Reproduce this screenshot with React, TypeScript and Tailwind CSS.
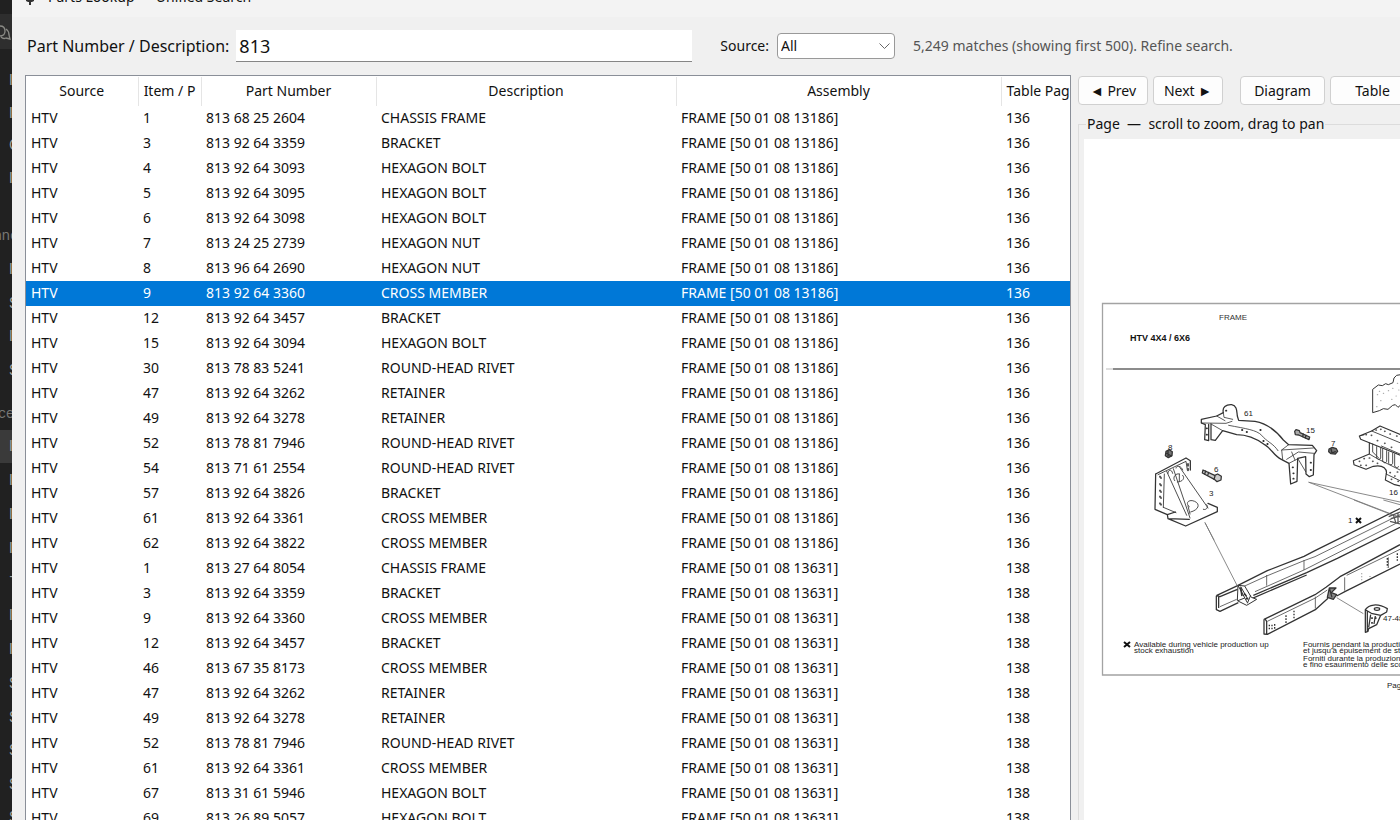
import { useState } from 'react';

type Part = {
  source: string;
  item: string;
  number: string;
  desc: string;
  assembly: string;
  page: string;
};

const FRAME_A = 'FRAME [50 01 08 13186]';
const FRAME_B = 'FRAME [50 01 08 13631]';

const part = (item: string, number: string, desc: string, assembly: string, page: string): Part => ({
  source: 'HTV', item, number, desc, assembly, page,
});

const PARTS: Part[] = [
  part('1', '813 68 25 2604', 'CHASSIS FRAME', FRAME_A, '136'),
  part('3', '813 92 64 3359', 'BRACKET', FRAME_A, '136'),
  part('4', '813 92 64 3093', 'HEXAGON BOLT', FRAME_A, '136'),
  part('5', '813 92 64 3095', 'HEXAGON BOLT', FRAME_A, '136'),
  part('6', '813 92 64 3098', 'HEXAGON BOLT', FRAME_A, '136'),
  part('7', '813 24 25 2739', 'HEXAGON NUT', FRAME_A, '136'),
  part('8', '813 96 64 2690', 'HEXAGON NUT', FRAME_A, '136'),
  part('9', '813 92 64 3360', 'CROSS MEMBER', FRAME_A, '136'),
  part('12', '813 92 64 3457', 'BRACKET', FRAME_A, '136'),
  part('15', '813 92 64 3094', 'HEXAGON BOLT', FRAME_A, '136'),
  part('30', '813 78 83 5241', 'ROUND-HEAD RIVET', FRAME_A, '136'),
  part('47', '813 92 64 3262', 'RETAINER', FRAME_A, '136'),
  part('49', '813 92 64 3278', 'RETAINER', FRAME_A, '136'),
  part('52', '813 78 81 7946', 'ROUND-HEAD RIVET', FRAME_A, '136'),
  part('54', '813 71 61 2554', 'ROUND-HEAD RIVET', FRAME_A, '136'),
  part('57', '813 92 64 3826', 'BRACKET', FRAME_A, '136'),
  part('61', '813 92 64 3361', 'CROSS MEMBER', FRAME_A, '136'),
  part('62', '813 92 64 3822', 'CROSS MEMBER', FRAME_A, '136'),
  part('1', '813 27 64 8054', 'CHASSIS FRAME', FRAME_B, '138'),
  part('3', '813 92 64 3359', 'BRACKET', FRAME_B, '138'),
  part('9', '813 92 64 3360', 'CROSS MEMBER', FRAME_B, '138'),
  part('12', '813 92 64 3457', 'BRACKET', FRAME_B, '138'),
  part('46', '813 67 35 8173', 'CROSS MEMBER', FRAME_B, '138'),
  part('47', '813 92 64 3262', 'RETAINER', FRAME_B, '138'),
  part('49', '813 92 64 3278', 'RETAINER', FRAME_B, '138'),
  part('52', '813 78 81 7946', 'ROUND-HEAD RIVET', FRAME_B, '138'),
  part('61', '813 92 64 3361', 'CROSS MEMBER', FRAME_B, '138'),
  part('67', '813 31 61 5946', 'HEXAGON BOLT', FRAME_B, '138'),
  part('69', '813 26 89 5057', 'HEXAGON BOLT', FRAME_B, '138'),
];

const HEADERS = ['Source', 'Item / P', 'Part Number', 'Description', 'Assembly', 'Table Pag'];

// Letters of the window behind that stick out on the left
const BEHIND = [
  { y: 80, t: 'I' }, { y: 113, t: 'I' }, { y: 145, t: 'C' }, { y: 178, t: 'I' }, { y: 269, t: 'I' },
  { y: 303, t: 'S' }, { y: 336, t: 'I' }, { y: 370, t: 'S' }, { y: 446, t: 'I' }, { y: 480, t: 'I' },
  { y: 514, t: 'I' }, { y: 548, t: 'I' }, { y: 576, t: '-' }, { y: 615, t: 'I' }, { y: 649, t: 'I' },
  { y: 683, t: 'S' }, { y: 717, t: 'S' }, { y: 750, t: 'S' }, { y: 784, t: 'S' }, { y: 817, t: 'S' },
];

function BackgroundWindow() {
  return (
    <div className="w-3 shrink-0 overflow-hidden bg-[#212121]">
      <svg width="12" height="820" fill="#a5a5a2" fontFamily="Inter, sans-serif" fontSize="14" aria-hidden="true">
        <rect y="14" width="12" height="35" fill="#2e2e2e" />
        <rect y="430" width="12" height="33" fill="#3a3a3a" />
        <g fill="none" stroke="#8b8b86" strokeWidth="1.3">
          <path d="M0 26c3 0 5 2 5 5s-2 5-5 5M6 29c3 2 3 4 3 6l1 4-4-1c-2 1-4 0-5-1" />
        </g>
        <text x="-6" y="240" fill="#777774">and</text>
        <text x="-2" y="418" fill="#777774">ces</text>
        {BEHIND.map((l) => (
          <text key={l.y} x="9" y={l.y + 5}>{l.t}</text>
        ))}
      </svg>
    </div>
  );
}

function Diagram() {
  return (
    <svg width="316" height="681" viewBox="1084 139 316 681" fontFamily="'Liberation Sans', Arial, sans-serif" role="img" aria-label="Frame diagram">
      <path d="M1400 303.5H1102.5V675H1400" fill="none" stroke="#a3a3a3" strokeWidth="1.3" />
      <path d="M1106 369H1113" stroke="#bbb" />
      <path d="M1113 369H1400" stroke="#666" strokeWidth="1.4" />
      <text x="1219" y="320" fontSize="8" fill="#333">FRAME</text>
      <text x="1130" y="341" fontSize="9" fontWeight="700" fill="#111">HTV 4X4 / 6X6</text>

      {/* cross member, bracket, bolts */}
      <g transform="translate(1140 390) scale(.33333)" fill="none" stroke="#333" strokeWidth="3.8" strokeLinejoin="round" strokeLinecap="round">
        <path d="M184 88L230 78 250 68C246 52 258 43 275 44 292 47 290 64 292 78L296 91 345 94C380 100 408 122 430 150L446 164 517 166 530 182 522 194 520 255 508 260 498 252 497 200 473 205 471 274 452 282 447 220 424 208C400 196 395 176 374 164 348 145 325 134 290 134L248 122 226 151 213 149 213 102 M184 88L184 99 196 104 194 149 206 152 206 103" />
        <path d="M250 68L252 82 278 88M184 99L258 100 276 94M213 102L248 122M266 106C318 116 350 120 365 136 380 155 400 160 414 182M446 164L425 180 428 208M425 180L520 174M440 208L475 186 522 190M447 220L470 208M455 186L465 210M473 205L497 245M230 78L255 92" strokeWidth="2.4" />
        <path d="M258 62h1M306 120h1M320 126h1M361 120h1M370 153h1M382 162h1M200 115h1M200 134h1M458 232h1M460 250h1M460 266h1M512 218h1M512 240h1" strokeWidth="5.5" />

        <path d="M47 252L138 204 151 212 151 240M47 252L45 358 82 374 84 386 137 408 232 365 232 352 204 340M82 374L106 366M84 386L148 388" />
        <path d="M54 254L138 214 142 240M73 252L70 352M80 244L140 376M100 236L150 384M118 230L204 354M84 250C84 238 95 236 98 250M108 234C108 226 124 226 128 240M104 272C96 262 108 248 118 252M118 252v22M128 256C136 264 128 276 112 276M148 350C134 340 146 326 164 334 182 342 176 360 152 366M144 348L150 372M190 358C200 362 206 350 200 344M70 352L108 368" strokeWidth="2.6" />
        <path d="M60 260l3 4M60 282l3 4M60 302l3 4M60 320l3 4M60 340l3 4M144 222v5M144 236v5" strokeWidth="6" stroke="#555" />

        <path d="M78 184l10-5 9 6-1 12-11 6-9-6z" fill="#777" />
        <path d="M80 190l14 8M84 184v14" strokeWidth="4" />
        <path d="M189 240l-2 9 36 19 8 7 12-5 1-11-11-7-9 4z" fill="#ccc" />
        <path d="M225 258l-3 10M197 243l-3 9M206 247l-3 9" />
        <path d="M464 124l4-5 10 3 2 6 29 13-2 8-31-14-10-1z" fill="#aaa" />
        <path d="M490 132l-2 8M498 136l-2 8" />
        <path d="M567 177l10-5 12 4 4 8-7 8-13-1-7-6z" fill="#777" />
        <path d="M573 177l3 12 10-4" strokeWidth="4" />

        <path d="M507 277L780 336M507 277L780 382M195 398L222 450" stroke="#777" strokeWidth="2.6" />
      </g>

      {/* torn plate and support, cut by the window edge */}
      <g transform="translate(1340 370) scale(.33333)" fill="none" stroke="#333" strokeWidth="3.4" strokeLinejoin="round" strokeLinecap="round">
        <path d="M182 14l-12 2-8 8-3 14-14 6-8-3-10 6-12-2-17 13v70l20-6 12-6 14 2 14-12 8-2 8 8 8-7" strokeWidth="3" />
        <path d="M112 74h1M122 92h1M110 110h1M130 70h1M145 62h1M118 64h1M158 55h1M168 78h1M155 88h1M172 40h1M176 60h1" stroke="#aaa" />
        <path d="M58 198l37-15 25-15 62 26M58 198l4 10 26 10 94 38M58 198l14-4M88 218v34l-48 20 2 12 36 14 22-9c30-6 44 8 38 27l-2 14 28 14 18 4" />
        <path d="M95 183l87 36M98 222v24l18 18M110 230v34c4 6 10 6 12 0v-30M128 236v38c4 6 10 6 12 0v-32M146 246v34c4 6 10 6 12 0v-30M164 252v36c4 6 8 6 12 2M88 252l24 14 68 34M138 312l42 20M124 228l56 24" strokeWidth="2.6" />
        <path d="M78 194h1M94 196h1M108 180h1M122 178h1M134 184h1M150 192h1M170 198h1M112 212h1M134 220h1M154 232h1M58 274h1M72 266h1M88 264h1M62 286h1M78 286h1M98 274h1M112 280h1M150 308h1M164 318h1M172 306h1M154 328h1M174 334h1" stroke="#555" strokeWidth="5" />
      </g>

      {/* chassis rails */}
      <g transform="translate(1200 500) scale(.33333)" fill="none" stroke="#333" strokeWidth="3.8" strokeLinejoin="round">
        <path d="M49 287L108 259 202 212 312 169 345 152 600 26M49 287v42l11 5 55-26M56 290l0 34M49 287l11 3 52-22M160 286L320 218 412 175 600 82M150 298L320 225" />
        <path d="M108 270L200 228 312 182 345 170 600 44M165 275L312 210 600 64M200 225v32M312 180v30M60 320l50-22" stroke="#555" strokeWidth="2.6" />
        <path d="M114 256l-2 46 28 14 30-18-16-6-20-34zM114 256l28 52M122 260l22 38M114 302l20-8M152 286l-10 24" fill="#fff" strokeWidth="3" />
        <path d="M122 262l4 26M138 296h7M132 280l7 8" strokeWidth="5" />
        <path d="M192 358L345 284 378 262 420 230 450 214 600 134M192 358v44l10 1 144-74 38-34M196 358l4 6v38M410 288L436 274 600 192" />
        <path d="M202 364l144-70 36-24M346 290v36M434 232v40M565 172v32M440 226L600 148" stroke="#555" strokeWidth="2.6" />
        <path d="M388 264l-6 28 18 6 10-14-16-6 14-14zM388 264l8 28" fill="#888" />
        <path d="M208 374v18M216 374v14M224 372v14M258 346v24M282 332v24M562 174v28M592 160v22" strokeDasharray="5 4" strokeWidth="4" />
        <path d="M485 220v24M510 228v8" strokeDasharray="3 6" stroke="#999" />
        <path d="M496 329C506 314 532 308 562 326L560 336 542 346 530 374 506 386 504 394 496 397zM496 329L514 340 542 346M502 334v60M512 344l-6 38M526 348l-4 24" />
        <ellipse cx="531" cy="327" rx="8" ry="4" />
        <path d="M516 352v5M516 366v5M527 352v5" strokeWidth="5" />
        <path d="M15 68L112 258M410 293L490 341M462 0L575 44M550 0L600 14" stroke="#777" strokeWidth="2.6" />
        <path d="M566 50l34-14M572 56l28-8M570 64l30 8M580 44l8 26M594 40v30" stroke="#555" />
      </g>

      <g fontSize="8" fill="#222">
        <text x="1244" y="416">61</text>
        <text x="1306" y="433">15</text>
        <text x="1331" y="446">7</text>
        <text x="1168" y="450">8</text>
        <text x="1214" y="472">6</text>
        <text x="1209" y="496">3</text>
        <text x="1389" y="495">16</text>
        <text x="1348" y="523">1</text>
        <text x="1383" y="621">47-48</text>
      </g>
      <path d="M1356 518l5 5m0-5l-5 5M1124 642l6 5m0-5l-6 5" stroke="#111" strokeWidth="2" />

      <g fontSize="8" fill="#222">
        <text x="1134" y="647">Available during vehicle production up</text>
        <text x="1134" y="653">stock exhaustion</text>
        <text x="1303" y="647">Fournis pendant la production</text>
        <text x="1303" y="653">et jusqu'à épuisement de stock</text>
        <text x="1303" y="661">Forniti durante la produzione</text>
        <text x="1303" y="667">e fino esaurimento delle scorte</text>
        <text x="1387" y="688">Page</text>
      </g>
    </svg>
  );
}

const toolButton = 'h-[29px] shrink-0 rounded border border-[#d0d0d0] bg-[#fdfdfd] text-center';

export default function App() {
  const [query, setQuery] = useState('813');
  const [source, setSource] = useState('All');
  const [selected, setSelected] = useState(7);

  return (
    <div className="flex h-screen overflow-hidden bg-[#f0f0f0] font-['Noto_Sans',sans-serif] text-sm text-[#111]">
      <BackgroundWindow />

      <div className="flex min-w-0 flex-1 flex-col">
        {/* title bar */}
        <header className="flex h-[17px] shrink-0 items-end overflow-hidden bg-[#f3f3f3] pb-3 pl-3">
          <svg width="12" height="16" viewBox="0 0 12 16" className="shrink-0" aria-hidden="true">
            <path d="M2 8h8v4l-2 1H7v3H5v-3H4l-2-1z" fill="#333" />
          </svg>
          <h1 className="ml-3 leading-4">Parts Lookup — Unified Search</h1>
        </header>

        {/* search row */}
        <div className="flex h-[58px] shrink-0 items-center whitespace-nowrap pl-[15px]">
          <label htmlFor="query" className="text-base">Part Number / Description:</label>
          <input
            id="query"
            value={query}
            onChange={(e) => setQuery(e.target.value)}
            className="ml-[7px] h-8 w-[456px] rounded-none border-b border-[#868686] bg-white px-[3px] text-lg outline-none"
          />
          <label htmlFor="source" className="ml-7">Source:</label>
          <div className="relative ml-2">
            <select
              id="source"
              value={source}
              onChange={(e) => setSource(e.target.value)}
              className="h-[26px] w-[118px] appearance-none rounded-sm border border-[#999] bg-white px-[3px] outline-none"
            >
              <option>All</option>
              <option>HTV</option>
            </select>
            <svg width="11" height="6" viewBox="0 0 11 6" className="pointer-events-none absolute right-[5px] top-[10px]" aria-hidden="true">
              <path d="M.5.5l5 5 5-5" fill="none" stroke="#666" />
            </svg>
          </div>
          <p className="ml-[18px] text-[#555]">5,249 matches (showing first 500). Refine search.</p>
        </div>

        <div className="flex min-h-0 flex-1 pl-[13px]">
          {/* results */}
          <div className="min-w-0 flex-1 overflow-hidden border border-b-0 border-[#8a8f98] bg-white pt-px">
            <table className="w-full table-fixed whitespace-nowrap">
              <colgroup>
                <col className="w-[112px]" />
                <col className="w-[63px]" />
                <col className="w-[175px]" />
                <col className="w-[300px]" />
                <col className="w-[325px]" />
                <col />
              </colgroup>
              <thead>
                <tr className="h-[29px]">
                  {HEADERS.map((h) => (
                    <th key={h} className="overflow-hidden border-r border-[#e5e5e5] px-0 pb-0.5 text-center font-normal last:border-r-0 last:pl-[5px] last:text-left">{h}</th>
                  ))}
                </tr>
              </thead>
              <tbody>
                {PARTS.map((p, i) => (
                  <tr
                    key={i}
                    onClick={() => setSelected(i)}
                    className={i === selected ? 'h-[25px] bg-[#0078d7] text-white' : 'h-[25px]'}
                  >
                    {[p.source, p.item, p.number, p.desc, p.assembly, p.page].map((v, c) => (
                      <td key={c} className="pb-0.5 pl-[5px]">{v}</td>
                    ))}
                  </tr>
                ))}
              </tbody>
            </table>
          </div>

          {/* page viewer */}
          <div className="ml-[7px] flex w-[23vw] shrink-0 flex-col overflow-hidden whitespace-nowrap pt-px">
            <div className="flex gap-[5px]">
              <button className={`${toolButton} w-[70px]`}>◄ Prev</button>
              <button className={`${toolButton} w-[70px]`}>Next ►</button>
              <button className={`${toolButton} ml-3 w-[85px]`}>Diagram</button>
              <button className={`${toolButton} w-[85px]`}>Table</button>
            </div>
            <fieldset className="mt-[9px] flex min-h-0 min-w-0 flex-1 flex-col border-l border-t border-[#dcdcdc] pl-[5px]">
              <legend className="ml-0.5 whitespace-pre px-px leading-5">Page  —  scroll to zoom, drag to pan</legend>
              <div className="mt-[5px] flex-1 cursor-grab overflow-hidden bg-white">
                <Diagram />
              </div>
            </fieldset>
          </div>
        </div>
      </div>
    </div>
  );
}
